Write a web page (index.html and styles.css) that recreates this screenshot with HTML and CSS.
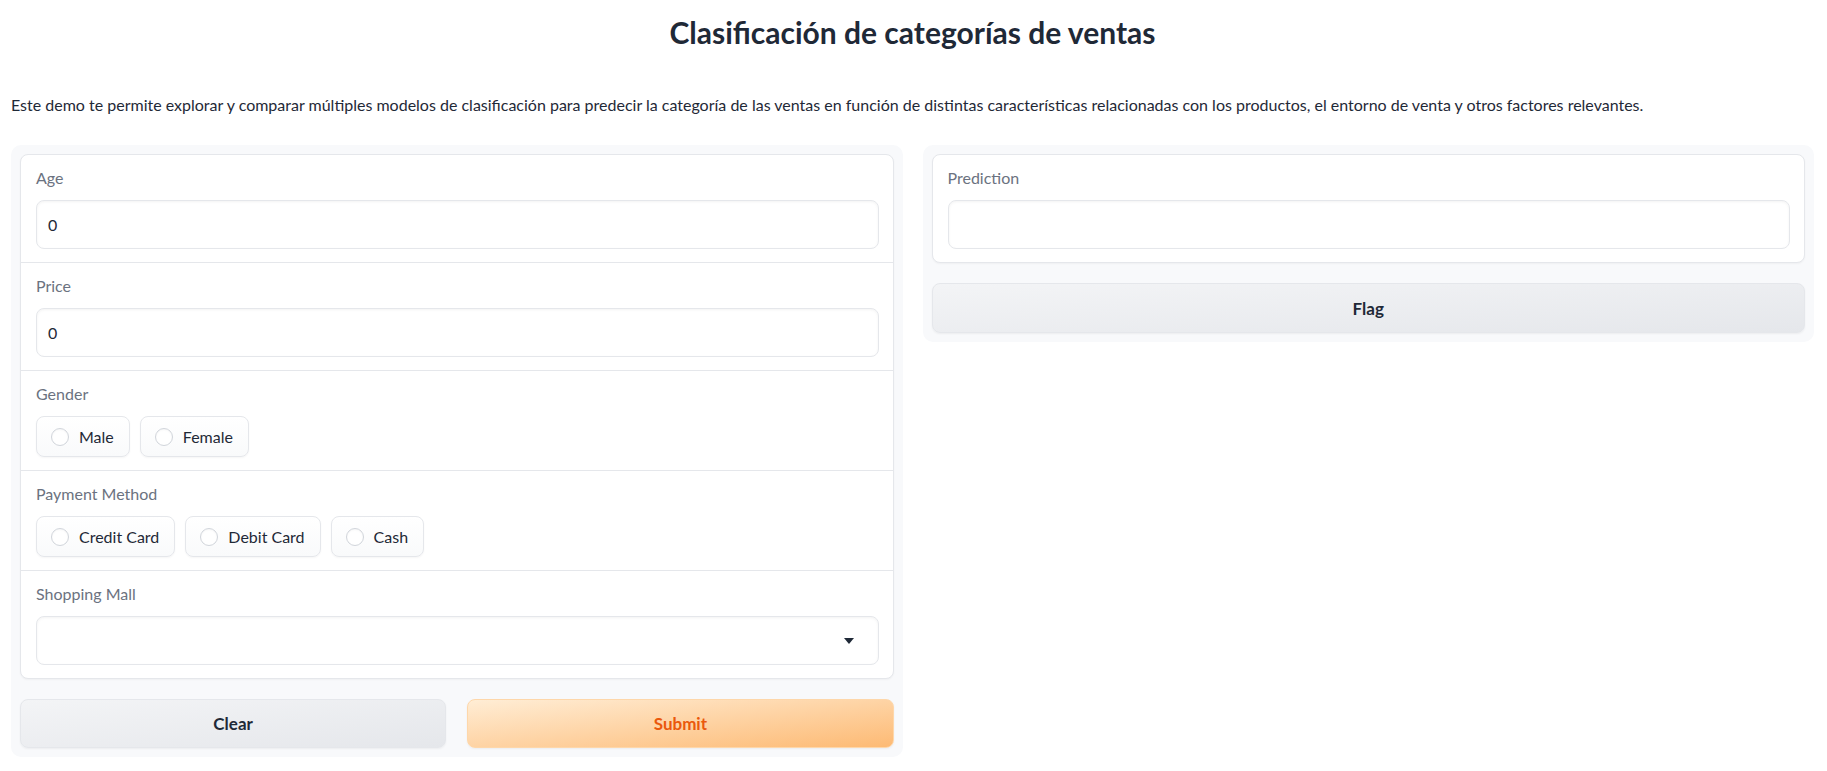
FILE: index.html
```html
<!DOCTYPE html>
<html lang="es">
<head>
<meta charset="utf-8">
<title>Clasificación de categorías de ventas</title>
<link rel="stylesheet" href="styles.css">
</head>
<body>
<div class="app">
  <h1 class="title">Clasificación de categorías de ventas</h1>
  <p class="desc">Este demo te permite explorar y comparar múltiples modelos de clasificación para predecir la categoría de las ventas en función de distintas características relacionadas con los productos, el entorno de venta y otros factores relevantes.</p>
  <div class="row">
    <div class="panel">
      <div class="form">
        <div class="block">
          <span class="label">Age</span>
          <div class="input">0</div>
        </div>
        <div class="block">
          <span class="label">Price</span>
          <div class="input">0</div>
        </div>
        <div class="block">
          <span class="label">Gender</span>
          <div class="chips">
            <span class="chip"><span class="radio"></span>Male</span>
            <span class="chip"><span class="radio"></span>Female</span>
          </div>
        </div>
        <div class="block">
          <span class="label">Payment Method</span>
          <div class="chips">
            <span class="chip"><span class="radio"></span>Credit Card</span>
            <span class="chip"><span class="radio"></span>Debit Card</span>
            <span class="chip"><span class="radio"></span>Cash</span>
          </div>
        </div>
        <div class="block">
          <span class="label">Shopping Mall</span>
          <div class="input select"><span class="caret"></span></div>
        </div>
      </div>
      <div class="btn-row">
        <button class="btn secondary">Clear</button>
        <button class="btn primary">Submit</button>
      </div>
    </div>
    <div class="panel">
      <div class="form">
        <div class="block">
          <span class="label">Prediction</span>
          <div class="input"></div>
        </div>
      </div>
      <button class="btn secondary">Flag</button>
    </div>
  </div>
</div>
</body>
</html>
```

FILE: styles.css
```css
* { box-sizing: border-box; }
html, body { margin: 0; padding: 0; background: #ffffff; }
body {
  font-family: Lato, "Open Sans", "Liberation Sans", sans-serif;
  color: #1f2937;
}
.app {
  padding: 0 13px 0 11px;
}
.title {
  margin: 0;
  padding-top: 12px;
  font-size: 30px;
  line-height: 40px;
  font-weight: 700;
  text-align: center;
  color: #1f2937;
}
.desc {
  margin: 41px 0 0 0;
  font-size: 16px;
  line-height: 24px;
  color: #1f2937;
}
.row {
  display: flex;
  gap: 20px;
  align-items: flex-start;
  margin-top: 28px;
}
.panel {
  flex: 1 1 0;
  min-width: 0;
  background: #f8f9fb;
  border-radius: 10px;
  padding: 9px;
  display: flex;
  flex-direction: column;
  gap: 20px;
}
.form {
  background: #ffffff;
  border: 1px solid #e5e7eb;
  border-radius: 8px;
  box-shadow: 0 1px 2px rgba(0, 0, 0, 0.04);
}
.block {
  padding: 12px 14px 13px 15px;
  display: flex;
  flex-direction: column;
  gap: 11px;
}
.block + .block { border-top: 1px solid #e5e7eb; }
.label {
  font-size: 16px;
  line-height: 22px;
  color: #6b7280;
}
.input {
  height: 49px;
  border: 1px solid #e5e7eb;
  border-radius: 8px;
  background: #ffffff;
  box-shadow: inset 0 1px 3px rgba(0, 0, 0, 0.05);
  padding: 0 11px;
  display: flex;
  align-items: center;
  font-size: 16px;
  color: #1f2937;
}
.select { justify-content: flex-end; padding-right: 24px; }
.caret {
  width: 0;
  height: 0;
  border-left: 5px solid transparent;
  border-right: 5px solid transparent;
  border-top: 6px solid #1f2937;
}
.chips {
  display: flex;
  gap: 10px;
}
.chip {
  height: 41px;
  display: inline-flex;
  align-items: center;
  gap: 10px;
  padding: 0 15px 0 14px;
  border: 1px solid #e5e7eb;
  border-radius: 8px;
  background: linear-gradient(to bottom, #ffffff, #f9fafb);
  box-shadow: 0 1px 2px rgba(0, 0, 0, 0.04);
  font-size: 16px;
  color: #1f2937;
}
.radio {
  width: 18px;
  height: 18px;
  border-radius: 50%;
  border: 1px solid #d1d5db;
  background: #ffffff;
  box-shadow: inset 0 1px 2px rgba(0, 0, 0, 0.04);
}
.btn-row {
  display: flex;
  gap: 21px;
}
.btn {
  flex: 1 1 0;
  height: 49px;
  border-radius: 8px;
  font-family: inherit;
  font-size: 17px;
  font-weight: 700;
  cursor: pointer;
}
.secondary {
  border: 1px solid #e5e7eb;
  background: linear-gradient(to bottom right, #f3f4f6, #e5e7eb);
  color: #1f2937;
  box-shadow: 0 1px 2px rgba(0, 0, 0, 0.05);
}
.primary {
  border: 1px solid #fed7aa;
  background: linear-gradient(to bottom right, #ffedd5, #fdba74);
  color: #ea580c;
  box-shadow: 0 1px 2px rgba(0, 0, 0, 0.05);
}
.panel > .btn { flex: none; height: 50px; }
```
